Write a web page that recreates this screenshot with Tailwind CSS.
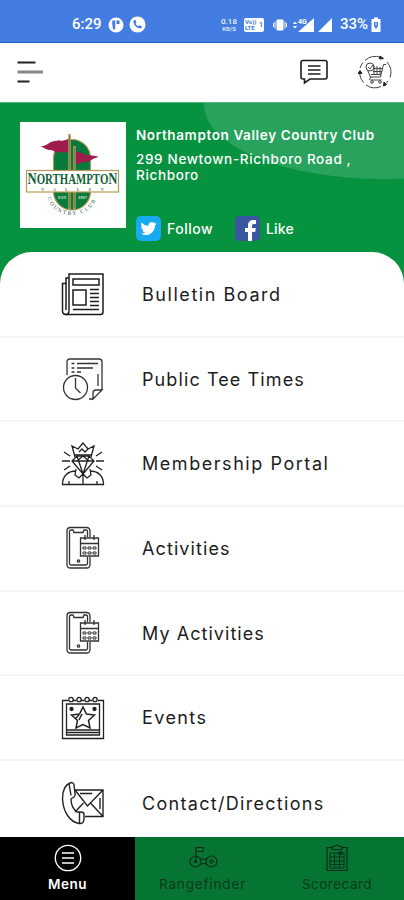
<!DOCTYPE html>
<html lang="en">
  <head>
    <meta charset="UTF-8" />
    <meta name="viewport" content="width=device-width, initial-scale=1.0" />
    <title>Northampton Valley Country Club</title>
    <script src="https://cdn.jsdelivr.net/npm/@tailwindcss/browser@4"></script>
  </head>

  <body class="flex flex-col h-[900px] w-[404px] overflow-hidden bg-white font-['Inter','Liberation_Sans',sans-serif]">
    <!-- Status bar -->
    <div class="flex items-center h-[43px] shrink-0 bg-[#437de2] border-b border-[#1f62cc] text-white pl-[72px] pt-[7px] font-[Roboto,sans-serif]">
      <span class="text-[15px] font-medium w-[28px] whitespace-nowrap">6:29</span>
      <svg class="w-4 h-4 ml-2" viewBox="0 0 16 16">
        <circle cx="8" cy="8" r="7.5" fill="#fff" />
        <path d="M4.2 3.5h3v9h-2c-.7-3-1-5-1-9zM8.5 3.5h3v3.500h-3z" fill="#437de2" />
      </svg>
      <svg class="w-[17px] h-[17px] ml-[5px]" viewBox="0 0 17 17">
        <circle cx="8.500" cy="8.500" r="8" fill="#fff" />
        <path d="M4.500 4.500l2-.4 1 2.500-1 1c.7 1.300 1.500 2.100 2.800 2.700l1-1 2.500 1-.3 2C8 12.800 4 9 4.500 4.500z" fill="#437de2" />
      </svg>
      <div class="flex flex-col items-center w-[20px] ml-[73px] text-[8px] leading-[8px] font-medium opacity-90">
        <span>0.18</span>
        <span class="text-[6px] leading-[6px]">KB/S</span>
      </div>
      <div class="flex items-center justify-between w-[20px] h-[14px] ml-[5px] px-px rounded-[2px] bg-white text-[#437de2] text-[6px] leading-[6px] font-bold">
        <span class="w-[12px]">Vo)) LTE</span>
        <span class="text-[7px]">1</span>
      </div>
      <svg class="w-[14px] h-[12px] ml-[9px]" viewBox="0 0 14 12">
        <rect x="3.500" y=".5" width="7" height="11" rx="1" fill="#fff" />
        <path d="M2 2.500v7M12 2.500v7M.5 4v4M13.500 4v4" stroke="#fff" />
      </svg>
      <svg class="w-[42px] h-[16px] ml-[5px]" viewBox="0 0 42 16">
        <path d="M22 1v14H6zM40 1v14H26z" fill="#fff" />
        <path d="M.8 7L3 4.500 5.200 7zM.8 9L3 11.500 5.200 9z" fill="#fff" />
        <text x="6" y="6.500" font-size="7" font-weight="700" fill="#fff">4G</text>
      </svg>
      <span class="text-[15px] font-medium ml-[6px] w-[28px] whitespace-nowrap">33%</span>
      <svg class="w-[10px] h-[15px] ml-[3px]" viewBox="0 0 10 15">
        <path d="M3 .5h4v1.500h2.500V15H.5V2H3z" fill="#fff" />
        <path d="M3 5h4v4L5 12 3 9z" fill="#437de2" />
        <path d="M5 5.500v3" stroke="#fff" />
      </svg>
    </div>

    <!-- Toolbar -->
    <header class="flex items-center h-[59px] shrink-0 pl-[17px] pr-[12px] pb-px bg-white">
      <svg class="w-[26px] h-[24px]" viewBox="0 0 26 24">
        <path d="M.5 2.500h18M.5 21.500h12" stroke="#222" stroke-width="2.200" />
        <path d="M.5 12H26" stroke="#888" stroke-width="3" />
      </svg>
      <svg class="w-[29px] h-[26px] ml-auto" viewBox="0 0 29 26" fill="none" stroke="#1c1c1c" stroke-width="1.600">
        <path d="M4 1.500h22q2 0 2 2v14.500q0 2-2 2H11l-5.500 4V20H4q-2 0-2-2V3.500q0-2 2-2z" />
        <path d="M9 7h12.500M9 11h12.500M9 15h12.500" />
      </svg>
      <svg class="w-[34px] h-[34px] ml-[30px]" viewBox="0 0 34 34" fill="none" stroke="#444" stroke-width="1">
        <path d="M7 5.500a15.500 15.500 0 0 1 16-3M29 7a15.500 15.500 0 0 1 3 15.500M30 26a15.500 15.500 0 0 1-4.500 4.500M23 31.500a15.500 15.500 0 0 1-15-1.500M5.500 27.500A15.500 15.500 0 0 1 1.500 18M2 13a15.500 15.500 0 0 1 3-5.500" />
        <path d="M22 1l3.500 2.500-4 .5zM25.500 31l.5-4 2.500 2.500zM0 18.500l2-3 2 3z" fill="#222" stroke="#222" />
        <path d="M28 9.500h-2.500L22.500 22H12.500L9.500 15M12.500 25h11M13 19.500h10M15 13.500h9.500M15 16.500h9M16 11v8M19 11v8M22 12v7" />
        <path d="M12.500 22l-1 3" />
        <circle cx="12" cy="12" r="4" />
        <path d="M10 12l2 2 3-4" />
        <circle cx="14" cy="27" r="1.300" />
        <circle cx="22" cy="27" r="1.300" />
      </svg>
    </header>

    <!-- Club card -->
    <section class="relative flex h-[184px] shrink-0 overflow-hidden bg-[#06923f] border-t border-[#58b77e] pl-5 pt-[19px] text-white">
      <div class="absolute left-[204px] -top-[72px] w-[356px] h-[148px] rounded-[50%] bg-[#28a25d]"></div>
      <svg class="relative w-[106px] h-[106px] shrink-0 bg-white" viewBox="0 0 106 106">
        <g stroke="#b89758" stroke-width="1.200">
          <rect x="33.500" y="17.500" width="37" height="70.500" rx="18.500" fill="#087a3b" />
          <path d="M49.700 16C43 21 36 17 30 20.500c-3 2-5 3.500-9.500 4 4 1 5.500 3.500 10 3.500 3 .3 4.500 2.500 8 2.500 5-.5 7-1 11.500 1.500z" fill="#a01c4c" stroke="none" />
          <path d="M55 30c5-1 7 2 12 3 4 .8 7 0 11.500 2-4 .8-5.500 2-8.500 3.800-5 2.500-9 .8-15 4.200z" fill="#a01c4c" stroke="none" />
          <path d="M49.500 12v75M54.500 24v63" stroke-width="2.600" />
          <path d="M49.500 14v72M54.500 26v60" stroke="#3f7c45" stroke-width=".6" />
          <rect x="6.500" y="48.500" width="92" height="21.500" fill="#fff" />
        </g>
        <g fill="#155f3c" font-family="Liberation Serif, serif" font-weight="700">
          <text x="7.500" y="62" font-size="14.500" textLength="90" lengthAdjust="spacingAndGlyphs"><tspan font-size="17">N</tspan>ORTHAMPTO<tspan font-size="17">N</tspan></text>
          <text x="21" y="68.500" font-size="5" textLength="63" font-weight="400">VALLEY</text>
          <text x="38" y="77" font-size="4.500" fill="#dce8d8">EST</text>
          <text x="58" y="77" font-size="4.500" fill="#dce8d8">1967</text>
          <path id="arc" d="M27.500 76C34 99 70 99 77.500 74" fill="none" />
          <text font-size="5.500" font-weight="400"><textPath href="#arc" textLength="61">COUNTRY CLUB</textPath></text>
        </g>
      </svg>
      <div class="relative flex flex-col pl-[10px] pt-[4px]">
        <h1 class="text-[13.500px] leading-[18px] font-semibold tracking-[0.62px] whitespace-nowrap">Northampton Valley Country Club</h1>
        <p class="mt-[7px] text-[13.500px] leading-4 font-medium tracking-[0.65px] whitespace-nowrap">299 Newtown-Richboro Road ,<br />Richboro</p>
        <div class="flex items-center mt-[33px] text-[14px] font-medium">
          <svg class="w-[25px] h-[25px]" viewBox="0 0 25 25">
            <rect width="25" height="25" rx="5" fill="#17aaf0" />
            <path transform="translate(4.500 4.500) scale(.67)" fill="#fff" d="M23.950 4.570a10 10 0 0 1-2.820.77 4.960 4.960 0 0 0 2.160-2.720c-.95.550-2 .95-3.130 1.180a4.920 4.920 0 0 0-8.380 4.480C7.690 8.090 4.070 6.130 1.640 3.160a4.920 4.920 0 0 0 1.520 6.570 4.900 4.900 0 0 1-2.230-.61v.06a4.920 4.920 0 0 0 3.950 4.830 5 5 0 0 1-2.210.08 4.940 4.940 0 0 0 4.600 3.420A9.870 9.870 0 0 1 0 19.540a14 14 0 0 0 7.550 2.210c9.050 0 14-7.500 14-13.980v-.64a9.900 9.900 0 0 0 2.400-2.560z" />
          </svg>
          <span class="ml-[6px] w-[68px] tracking-[0.5px]">Follow</span>
          <svg class="w-[25px] h-[25px]" viewBox="0 0 25 25">
            <rect width="25" height="25" rx="4.500" fill="#3956a0" />
            <path d="M13 25v-9h-3v-4h3V9.500C13 5.800 15.300 4 18.500 4H21v4h-2c-1.500 0-2 .7-2 2v2h3.800l-.6 4H17v9z" fill="#fff" />
          </svg>
          <span class="ml-[6px] tracking-[0.2px]">Like</span>
        </div>
      </div>
    </section>

    <!-- Menu list -->
    <main class="relative -mt-[34px] flex flex-col flex-grow min-h-0 overflow-hidden rounded-t-[32px] bg-white pt-px text-[18px] text-[#1c1c1c]">
      <div class="flex items-center h-[84.700px] shrink-0 border-b-2 border-[#f5f5f5] pl-[61px]">
        <svg class="w-[44px] h-[44px]" viewBox="0 0 44 44" fill="none" stroke="#1c1c1c" stroke-width="1.500">
          <path d="M8 38.500V2h34v38q0 2.500-2.500 2.500H5q-3.500 0-3.500-3.500V11.500H5V6h3" />
          <path d="M5 11v27M8 38.500q0 4-3.500 4" />
          <rect x="12" y="7" width="26" height="6" />
          <rect x="12" y="18" width="13" height="15" />
          <path d="M29 17.500h9M29 21.500h9M29 25.500h9M29 29.500h9M29 33.500h9M12 37.500h26" />
        </svg>
        <span class="ml-[37px] tracking-[1.55px]">Bulletin Board</span>
      </div>
      <div class="flex items-center h-[84.700px] shrink-0 border-b-2 border-[#f5f5f5] pl-[61px]">
        <svg class="w-[44px] h-[44px]" viewBox="0 0 44 44" fill="none" stroke="#333" stroke-width="1.300">
          <path d="M6 18V5q0-3 3-3h29q3 0 3 3v28L32 42h-4M41 33h-6q-3 0-3 3v6zM37 17v12" />
          <path d="M10.500 6.500h3M16 6.500h21M10.500 11h3M16 11h16M10.500 15h3M16 15h4" />
          <circle cx="14.500" cy="30.500" r="12" />
          <path d="M14.500 21v10l5 5" />
        </svg>
        <span class="ml-[37px] tracking-[1.1px]">Public Tee Times</span>
      </div>
      <div class="flex items-center h-[84.700px] shrink-0 border-b-2 border-[#f5f5f5] pl-[61px]">
        <svg class="w-[44px] h-[44px]" viewBox="0 0 44 44" fill="none" stroke="#222" stroke-width="1.300">
          <path d="M14 15L11 4l6 3 5-6 5 6 6-3-3 11M14 13h16M18 10l3-3 3 3 3-3" />
          <path d="M11 19l5-5h12l5 5-11 13zM11 19h22M16 14l6 18 6-18M16 19l6-5 6 5" />
          <path d="M1 19h8M35 19h8M3 10l6 4M41 10l-6 4M3 28l6-4M41 28l-6-4" />
          <path d="M15 29C7 29 1.500 34 1.500 42.500h41C42.500 34 37 29 29 29M15 27l-1 6 4 3 4-4 4 4 4-3-1-6M22 32v10.500M8 39v3M36 39v3" />
        </svg>
        <span class="ml-[37px] tracking-[1.55px]">Membership Portal</span>
      </div>
      <div class="flex items-center h-[84.700px] shrink-0 border-b-2 border-[#f5f5f5] pl-[61px]">
        <svg class="w-[44px] h-[44px]" viewBox="0 0 44 44" fill="none" stroke="#333" stroke-width="1.300">
          <path d="M29 11V5q0-3.500-3.500-3.500h-16Q6 1.500 6 5v33.500Q6 42 9.500 42h16q3.500 0 3.500-3.500V31" />
          <path d="M26.500 11V5.500q0-1.500-1.500-1.500h-2l-1 2.500h-9L12 4h-2Q8.500 4 8.500 5.500v32q0 1.500 1.500 1.500h15q1.500 0 1.500-1.500V31" />
          <path d="M19.500 12h18v18h-18zM19.500 17.500h18M24 9v5M33 9v5" />
          <path d="M22 21h3v2h-3zM27 21h3v2h-3zM32 21h3v2h-3zM22 26h3v2h-3zM27 26h3v2h-3zM32 26h3v2h-3z" stroke-width="1" />
          <circle cx="17.500" cy="35" r="1.200" />
        </svg>
        <span class="ml-[37px] tracking-[1.1px]">Activities</span>
      </div>
      <div class="flex items-center h-[84.700px] shrink-0 border-b-2 border-[#f5f5f5] pl-[61px]">
        <svg class="w-[44px] h-[44px]" viewBox="0 0 44 44" fill="none" stroke="#333" stroke-width="1.300">
          <path d="M29 11V5q0-3.500-3.500-3.500h-16Q6 1.500 6 5v33.500Q6 42 9.500 42h16q3.500 0 3.500-3.500V31" />
          <path d="M26.500 11V5.500q0-1.500-1.500-1.500h-2l-1 2.500h-9L12 4h-2Q8.500 4 8.500 5.500v32q0 1.500 1.500 1.500h15q1.500 0 1.500-1.500V31" />
          <path d="M19.500 12h18v18h-18zM19.500 17.500h18M24 9v5M33 9v5" />
          <path d="M22 21h3v2h-3zM27 21h3v2h-3zM32 21h3v2h-3zM22 26h3v2h-3zM27 26h3v2h-3zM32 26h3v2h-3z" stroke-width="1" />
          <circle cx="17.500" cy="35" r="1.200" />
        </svg>
        <span class="ml-[37px] tracking-[1.05px]">My Activities</span>
      </div>
      <div class="flex items-center h-[84.700px] shrink-0 border-b-2 border-[#f5f5f5] pl-[61px]">
        <svg class="w-[44px] h-[44px]" viewBox="0 0 44 44" fill="none" stroke="#222" stroke-width="1.300">
          <path d="M7 4.500H1.500v38h41v-38H37M12 4.500h3M20 4.500h3M28 4.500h3" />
          <path d="M5.500 8h33v31h-33zM5.500 34h33M5.500 36.500h33" />
          <circle cx="10" cy="3.500" r="2.200" />
          <circle cx="18" cy="3.500" r="2.200" />
          <circle cx="26" cy="3.500" r="2.200" />
          <circle cx="34" cy="3.500" r="2.200" />
          <path d="M22 11l3.500 7 8 1-6 5.500 1.500 7.500-7-3.500-7 3.500 1.500-7.500-6-5.500 8-1zM15 22l3-3M18 24l3-6" stroke-width="1.500" />
          <circle cx="10.500" cy="13" r="1.500" fill="#222" />
          <circle cx="33.500" cy="13" r="1.500" fill="#222" />
        </svg>
        <span class="ml-[37px] tracking-[1.4px]">Events</span>
      </div>
      <div class="flex items-center h-[84.700px] shrink-0 pl-[61px]">
        <svg class="w-[44px] h-[44px]" viewBox="0 0 44 44" fill="none" stroke="#222" stroke-width="1.400">
          <path d="M14 9h28v26.500H24M14 9l12.500 16L42 9M14 31l8.500-9M42 35.500L29.500 22M19 12.500h12M39 17v11" />
          <path d="M10 1.500c-6 2-8.500 8-8.500 16C2 31 9 41 18 42.500q4.500.5 5-4v-5q0-2.500-3-2.500h-4c-4-3-6-8-6-13l3.500-2.500q1-1 .5-3l-1-9q-.5-2-3-2zM8 2.500l2 12M18.500 31v11" />
        </svg>
        <span class="ml-[37px] tracking-[1.3px]">Contact/Directions</span>
      </div>
    </main>

    <!-- Bottom navigation -->
    <nav class="flex h-[63px] shrink-0 bg-[#067433] text-[13.500px] leading-4">
      <div class="flex flex-col items-center w-[135px] pt-[7px] bg-black text-white">
        <svg class="w-[28px] h-[28px]" viewBox="0 0 28 28" fill="none" stroke="#fff" stroke-width="1.300">
          <circle cx="14" cy="14" r="12.700" />
          <path d="M8 9h12M8 14h12M8 19h12" />
        </svg>
        <span class="mt-[4px] font-semibold tracking-[0.5px]">Menu</span>
      </div>
      <div class="flex flex-col items-center w-[135px] pt-[7px] text-[#0b3a1c]">
        <svg class="w-[30px] h-[28px]" viewBox="0 0 30 28" fill="none" stroke="#102c18" stroke-width="1.200">
          <path d="M8 18V3.500h7v4H8M13 14.500q3 2 6 0M13 20.500q3-2 6 0" />
          <circle cx="7.500" cy="17.500" r="5.500" />
          <circle cx="23.500" cy="17.500" r="5.500" />
          <circle cx="7.500" cy="17.500" r="1" />
          <circle cx="23.500" cy="17.500" r="1.500" />
        </svg>
        <span class="mt-[4px] tracking-[0.85px]">Rangefinder</span>
      </div>
      <div class="flex flex-col items-center w-[134px] pt-[7px] text-[#0b3a1c]">
        <svg class="w-[24px] h-[28px]" viewBox="0 0 24 28" fill="none" stroke="#102c18" stroke-width="1.200">
          <path d="M7 3.500H2v23h20v-23h-5M7 5.500v-3h2.500q2.500-3 5 0H17v3z" />
          <path d="M5 9h14v15H5zM5 13h14M5 17h14M5 20.500h14M9.500 9v15M14.500 9v15" stroke-width=".9" />
          <circle cx="15.500" cy="9" r="1.500" fill="#102c18" />
        </svg>
        <span class="mt-[4px] tracking-[0.5px]">Scorecard</span>
      </div>
    </nav>
  </body>
</html>
